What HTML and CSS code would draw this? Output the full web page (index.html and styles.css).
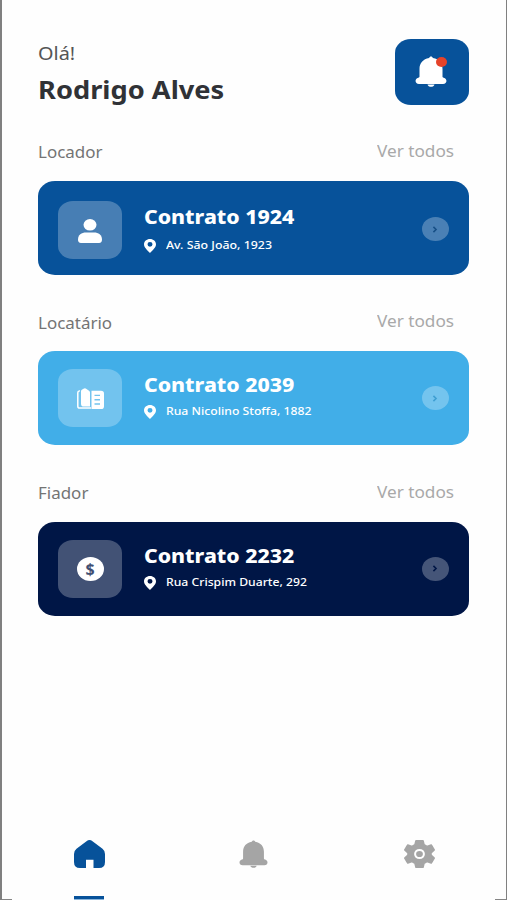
FILE: index.html
```html
<!DOCTYPE html>
<html lang="pt-BR">
<head>
<meta charset="utf-8">
<title>Contratos</title>
<link rel="stylesheet" href="styles.css">
</head>
<body>
<svg class="defs" width="0" height="0" aria-hidden="true">
  <symbol id="bell" viewBox="0 0 32 30" preserveAspectRatio="none"><path d="M16 .5c1 0 1.600.6 1.900 1.500C24 3 27.500 7 27.500 12.500v7.300c0 .7.400 1 1.200 1.200 4 1 3.500 6-.7 6H4c-4.200 0-4.700-5-.7-6 .8-.2 1.200-.5 1.200-1.200v-7.300C4.500 7 8 3 14.100 2c.3-.9.9-1.500 1.900-1.500z"/><path d="M12.500 27.500h7c-.6 3-6.400 3-7 0z"/></symbol>
  <symbol id="pin" viewBox="0 0 12 15" preserveAspectRatio="none"><path fill-rule="evenodd" d="M6 0c3.400 0 6 2.500 6 5.700C12 9.500 8.500 12 6 15 3.500 12 0 9.500 0 5.700 0 2.500 2.600 0 6 0zm0 3.200a2.500 2.500 0 1 0 0 5 2.500 2.500 0 0 0 0-5z"/></symbol>
  <symbol id="chevron" viewBox="0 0 6 8"><path d="M1.200 1l3 3-3 3" fill="none" stroke="currentColor" stroke-width="1.800"/></symbol>
</svg>
<main class="app">
  <header class="header">
    <div class="greeting">
      <p class="hello"><span>Olá!</span></p>
      <h1 class="name"><span>Rodrigo Alves</span></h1>
    </div>
    <button class="notify" aria-label="Notificações"><svg class="notify-bell"><use href="#bell"/></svg><i class="dot"></i></button>
  </header>

  <section class="group landlord">
    <div class="group-head"><h2><span>Locador</span></h2><a class="all"><span>Ver todos</span></a></div>
    <article class="card">
      <div class="tile"><svg class="person" viewBox="0 0 24 24" preserveAspectRatio="none"><ellipse cx="12" cy="5.800" rx="6.500" ry="5.800"/><path d="M0 20.500C0 16 3.500 13.500 8 13.500h8c4.500 0 8 2.500 8 7 0 2.300-.8 3.500-3 3.500H3c-2.200 0-3-1.200-3-3.500z"/></svg></div>
      <div class="info"><h3><span>Contrato 1924</span></h3><p><svg class="pin"><use href="#pin"/></svg><span class="address">Av. São João, 1923</span></p></div>
      <div class="go"><svg><use href="#chevron"/></svg></div>
    </article>
  </section>

  <section class="group tenant">
    <div class="group-head"><h2><span>Locatário</span></h2><a class="all"><span>Ver todos</span></a></div>
    <article class="card">
      <div class="tile"><svg class="book" viewBox="0 0 27 22" preserveAspectRatio="none"><path d="M3 3H2.500Q.8 3.300.8 5v14q0 2 2 2H14" fill="none" stroke="#fff" stroke-width="1.500"/><path d="M4 3.500C4 1.500 5.500 1.800 6.500.8Q8-.3 9.500 1L12 2.800q1 .6 1 2V19.500H7q-3 0-3-3z"/><path fill-rule="evenodd" d="M14.500 3H24q3 0 3 3v13q0 3-3 3h-9.500zm3 4v1.500h5.500V7zm0 4.500V13h5.500v-1.500zm0 4.500v1.500h5.500V16z"/></svg></div>
      <div class="info"><h3><span>Contrato 2039</span></h3><p><svg class="pin"><use href="#pin"/></svg><span class="address">Rua Nicolino Stoffa, 1882</span></p></div>
      <div class="go"><svg><use href="#chevron"/></svg></div>
    </article>
  </section>

  <section class="group guarantor">
    <div class="group-head"><h2><span>Fiador</span></h2><a class="all"><span>Ver todos</span></a></div>
    <article class="card">
      <div class="tile"><div class="coin">$</div></div>
      <div class="info"><h3><span>Contrato 2232</span></h3><p><svg class="pin"><use href="#pin"/></svg><span class="address">Rua Crispim Duarte, 292</span></p></div>
      <div class="go"><svg><use href="#chevron"/></svg></div>
    </article>
  </section>

  <nav class="tabs">
    <a class="tab active"><svg class="home" viewBox="0 0 31 28" preserveAspectRatio="none"><path d="M12.500 1.200q3-2.200 6 0l10 7.600Q31 10.800 31 14v8q0 6-6 6h-5.500v-8.200h-7.500V28H6q-6 0-6-6v-8q0-3.200 2.500-5.200z"/></svg></a>
    <a class="tab"><svg class="tab-bell"><use href="#bell"/></svg></a>
    <a class="tab"><svg class="gear" viewBox="0 0 31 28" preserveAspectRatio="none"><path d="M12 .8h7l1 4 3 1.600 4.200-1.400 3 5-3.200 2.900v2.200l3.200 2.900-3 5-4.200-1.400-3 1.600-1 4h-7l-1-4-3-1.600L3.800 23l-3-5L4 15.100v-2.200L.8 10l3-5L8 6.400l3-1.600z" stroke="currentColor" stroke-width="1.600" stroke-linejoin="round"/><ellipse cx="15.500" cy="14" rx="4.400" ry="4.100" fill="none" stroke="#fff" stroke-width="2"/></svg></a>
  </nav>
</main>
</body>
</html>
```

FILE: styles.css
```css
* { box-sizing: border-box; margin: 0; padding: 0; }
body { background: #fefefe; font-family: "Noto Sans", "Open Sans", sans-serif; }
svg { display: block; fill: currentColor; overflow: visible; }
.defs { position: absolute; }
.app {
  width: 507px; height: 900px; overflow: hidden;
  display: flex; flex-direction: column;
  padding: 38px 37px 0 36px;
  border-left: 2px solid #808080; border-right: 1px solid #808080;
  background:
    linear-gradient(#858585, #858585) 0 100% / 10px 1px no-repeat,
    linear-gradient(#858585, #858585) 100% 100% / 11px 1px no-repeat,
    #fefefe;
}
h1 span, h2 span, h3 span, .hello span, .all span, .address {
  display: inline-block; white-space: nowrap; transform-origin: 0 50%; transform: scaleX(1.075);
}
.header { display: flex; justify-content: space-between; height: 102px; }
.hello { font-size: 18.500px; line-height: 29px; color: #555; }
.name { font-size: 25px; line-height: 45px; font-weight: 700; color: #303236; }
.name span, h3 span { transform: scaleX(1.09); }
.notify {
  position: relative; width: 74px; height: 66px; margin-top: 1px; border: 0; border-radius: 16px / 14px;
  background: #07529a; color: #fff; display: flex; justify-content: center; padding-top: 17px; padding-right: 3px;
}
.notify-bell { width: 32px; height: 31px; }
.dot { position: absolute; left: 41px; top: 17.500px; width: 11px; height: 10px; border-radius: 50%; background: #e5432a; }
.group { height: 170px; }
.tenant { height: 170.500px; }
.group-head { display: flex; justify-content: space-between; height: 41px; }
h2 { font-size: 16px; font-weight: 400; color: #747474; line-height: 25px; }
h2 span { transform: scaleX(1.06); }
.all { font-size: 16px; color: #a9a9a9; width: 92.500px; line-height: 22px; }
.tenant h2 { line-height: 27px; }
.tenant .all { line-height: 23px; }
.card {
  display: flex; height: 94px; padding: 18px 20px 0; color: #fff;
  border-radius: 17px / 15px; background: #07529a;
}
.tenant .card { background: #41aee8; }
.guarantor .card { background: #001646; }
.landlord .card { padding-top: 20px; }
.tile {
  width: 64px; height: 58px; border-radius: 15px / 13px; background: rgba(255,255,255,.26);
  display: flex; align-items: center; justify-content: center;
}
.person { width: 24px; height: 24px; margin-top: 2px; }
.book { width: 27px; height: 21px; }
.coin {
  width: 27px; height: 24px; border-radius: 50%; background: #fff; color: #414f73;
  font-weight: 700; font-size: 16px; line-height: 24px; text-align: center;
}
.info { width: 277px; margin-left: 22px; }
h3 { font-size: 19.500px; font-weight: 800; line-height: 32px; }
.info p { display: flex; align-items: center; height: 22px; font-size: 11.500px; font-weight: 500; }
.tenant .info p { height: 19px; }
.guarantor .info p { height: 20px; }
.tenant .address, .guarantor .address { transform: scaleX(1.06); }
.pin { width: 12px; height: 14px; margin: 3px 10px 0 -.5px; }
.go {
  width: 27px; height: 24px; margin: 16px 0 0 1px; border-radius: 50%;
  background: rgba(255,255,255,.27); color: #174f86;
  display: flex; align-items: center; justify-content: center;
}
.go svg { width: 6px; height: 7px; margin-right: 1px; }
.tenant .go { color: #3f9fd2; }
.guarantor .go { color: #001646; }
.guarantor .go, .tenant .go { margin-top: 17px; }
.tabs { display: flex; justify-content: space-between; margin: auto 34px 0 36px; height: 60px; color: #a5a5a5; }
.tab { width: 31px; height: 60px; }
.active { color: #07529a; background: linear-gradient(#07529a 0 3px, #8bb6dc 3px) 0 100% / 30px 4px no-repeat; }
.home, .gear { width: 31px; height: 28px; }
.tab-bell { width: 29px; height: 28px; }
```
